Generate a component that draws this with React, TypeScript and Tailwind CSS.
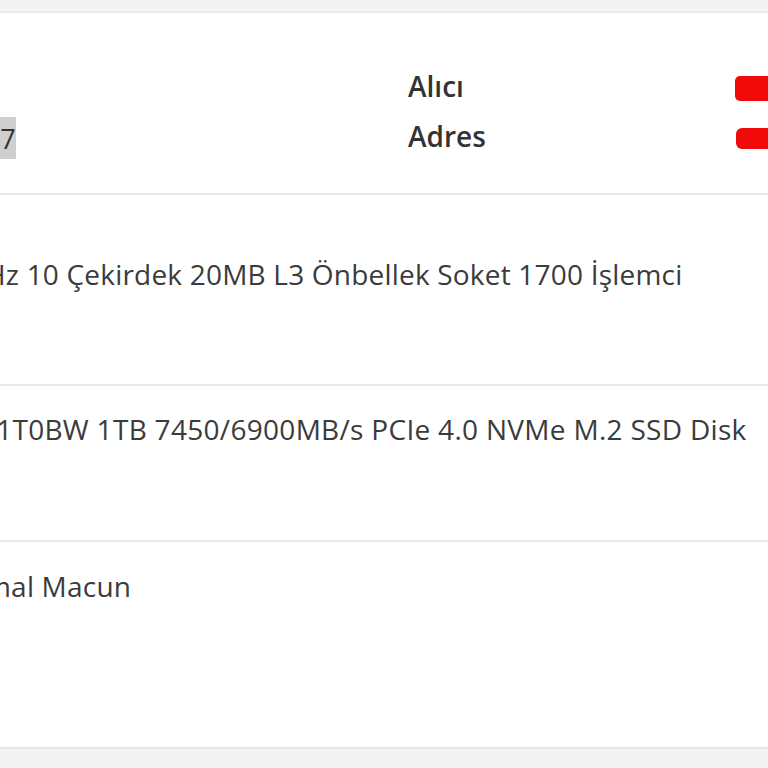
import React from "react";

export default function App() {
  const font = { fontFamily: '"Open Sans", "Noto Sans", sans-serif' };
  return (
    <div
      className="w-[768px] h-[768px] bg-[#f3f3f3] overflow-hidden pt-[11px] text-[#3b3b3b]"
      style={font}
    >
      <div className="bg-white border-t-2 border-[#ececec] border-b-2 border-b-[#e6e6e6] flex flex-col">
        {/* Row 1: recipient */}
        <div className="h-[182px] border-b-2 border-[#e8e8e8] flex items-start">
          <div className="w-[408px] shrink-0 pt-[104px]">
            <div className="h-[42px] w-[16px] bg-[#cfcfcf] flex items-center justify-center text-[27px] leading-none text-[#333]">
              7
            </div>
          </div>
          <div className="w-[327px] shrink-0 pt-[55px] flex flex-col gap-[13px] text-[28px] leading-[37px] font-semibold text-[#333]">
            <span>Alıcı</span>
            <span>Adres</span>
          </div>
          <div className="flex-1 pt-[63px] flex flex-col gap-[27px]">
            <div className="h-[25px] w-[40px] rounded-l-[5px] bg-[#f00a0a]" />
            <div className="ml-[1px] h-[21px] w-[40px] rounded-l-[6px] bg-[#f00a0a]" />
          </div>
        </div>
        {/* Row 2 */}
        <div className="h-[191px] border-b-2 border-[#e8e8e8] pt-[61px] whitespace-nowrap">
          <span className="ml-[-15px] text-[28px] tracking-[0.2px] leading-[37px]">Hz 10 Çekirdek 20MB L3 Önbellek Soket 1700 İşlemci</span>
        </div>
        {/* Row 3 */}
        <div className="h-[156px] border-b-2 border-[#e8e8e8] pt-[25px] whitespace-nowrap">
          <span className="ml-[-21px] text-[28px] tracking-[0.3px] leading-[37px]">P1T0BW 1TB 7450/6900MB/s PCIe 4.0 NVMe M.2 SSD Disk</span>
        </div>
        {/* Row 4 */}
        <div className="h-[205px] pt-[26px] whitespace-nowrap">
          <span className="ml-[-15px] text-[28px] tracking-[0.2px] leading-[37px]">mal Macun</span>
        </div>
      </div>
    </div>
  );
}
